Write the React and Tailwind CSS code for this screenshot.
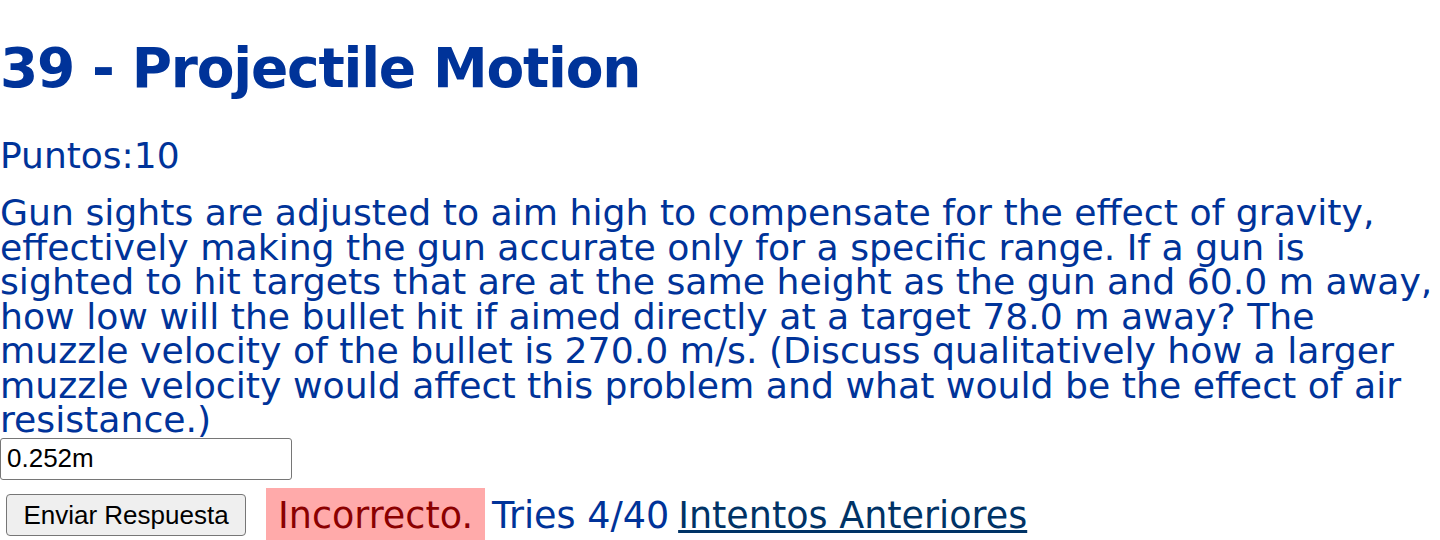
import React from "react";

const body = { fontFamily: '"DejaVu Sans", Verdana, sans-serif' };
const arial = { fontFamily: '"Liberation Sans", Arial, sans-serif' };

const lines = [
  "Gun sights are adjusted to aim high to compensate for the effect of gravity,",
  "effectively making the gun accurate only for a specific range. If a gun is",
  "sighted to hit targets that are at the same height as the gun and 60.0 m away,",
  "how low will the bullet hit if aimed directly at a target 78.0 m away? The",
  "muzzle velocity of the bullet is 270.0 m/s. (Discuss qualitatively how a larger",
  "muzzle velocity would affect this problem and what would be the effect of air",
  "resistance.)",
];

export default function App() {
  return (
    <div className="min-h-screen bg-white text-[#003399] overflow-hidden" style={body}>
      <h1 className="pt-[36px] text-[55px] font-bold leading-[64px] tracking-[-1.2px]">39 - Projectile Motion</h1>
      <p className="mt-[38px] text-[36px] leading-[35px]">Puntos:10</p>
      <p className="mt-[23px] text-[36.2px] leading-[34.5px] whitespace-nowrap">
        {lines.map((l, i) => (
          <React.Fragment key={i}>
            {l}
            {i < lines.length - 1 && <br />}
          </React.Fragment>
        ))}
      </p>
      <input
        type="text"
        defaultValue="0.252m"
        className="block w-[292px] h-[42px] px-[6px] border border-[#767676] rounded-[3px] text-[26px] text-black"
        style={arial}
      />
      <div className="flex items-center mt-[8px]">
        <button
          className="ml-[6px] w-[240px] h-[42px] bg-[#efefef] border border-[#767676] rounded-[4px] text-[26px] text-black"
          style={arial}
        >
          Enviar Respuesta
        </button>
        <span className="ml-[20px] px-[12px] py-[10px] bg-[#ffaaaa] text-[#8b0000] text-[36.5px] leading-[35px]">
          Incorrecto.
        </span>
        <span className="ml-[7px] text-[36.5px] leading-[35px]">Tries 4/40</span>
        <a href="#" className="ml-[9px] text-[36.5px] leading-[35px] text-[#003366] underline">
          Intentos Anteriores
        </a>
      </div>
    </div>
  );
}
